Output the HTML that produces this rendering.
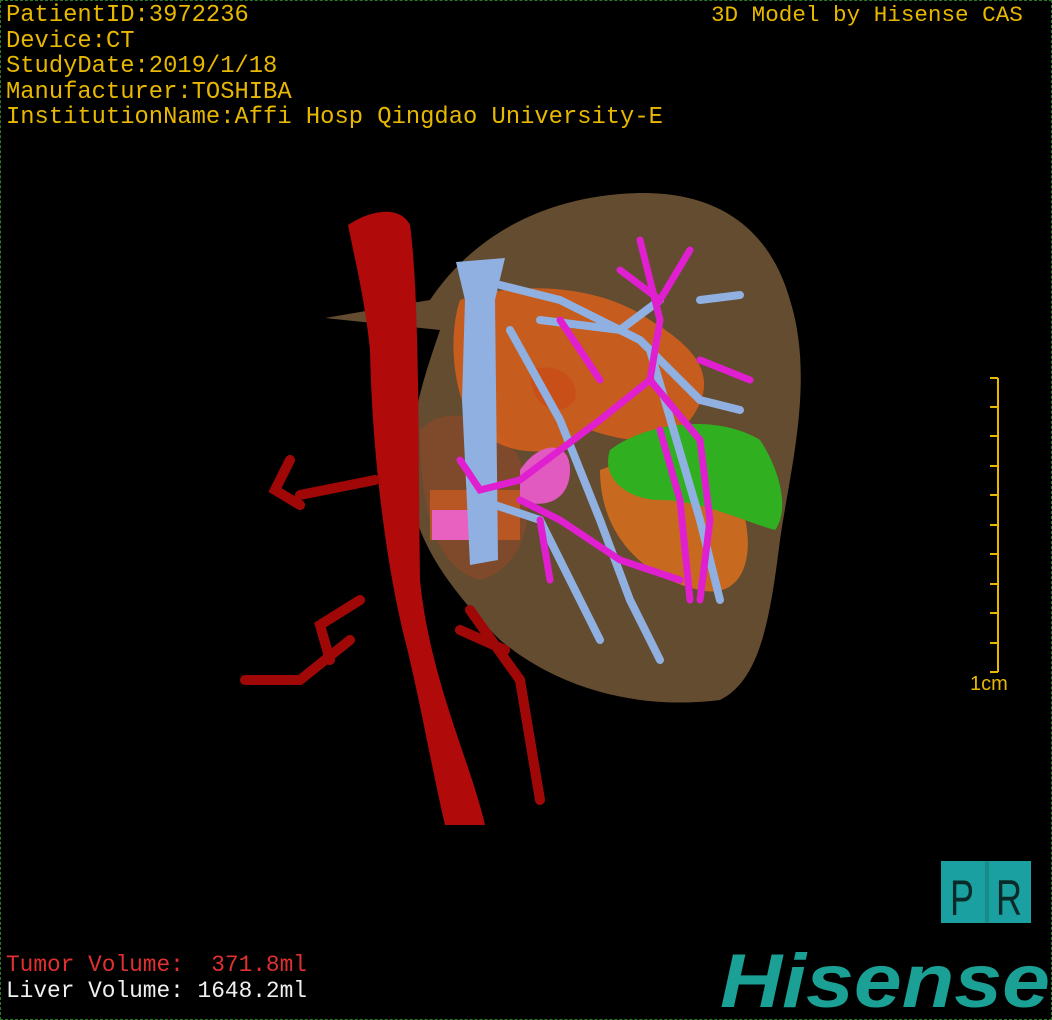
<!DOCTYPE html>
<html><head><style>
body{margin:0;background:#000;width:1052px;height:1020px;overflow:hidden;position:relative;font-family:"Liberation Mono","DejaVu Sans Mono",monospace}
.b{position:absolute;left:0;top:0;width:1050px;height:1018px;border:1px dashed #2a7a2a}
.t{position:absolute;color:#e8b800;font-size:23.8px;line-height:25.5px;white-space:pre;letter-spacing:0px}
</style></head><body>
<div class="b"></div>
<svg width="1052" height="1020" style="position:absolute;left:0;top:0">
<path d="M325,318 L430,300 C470,240 540,195 640,193 C720,192 770,230 790,300 C815,380 790,470 780,540 C770,620 760,680 720,700 C640,710 560,690 500,640 C440,580 400,520 410,450 C415,400 430,360 440,330 Z" fill="#6e5434" opacity="0.9"/>
<path d="M420,430 C450,400 500,420 520,460 C540,520 520,570 480,580 C440,570 420,520 420,430Z" fill="#8a4a2a" opacity=".7"/>
<path d="M460,300 C520,280 600,285 650,320 C700,350 720,380 690,420 C660,450 620,440 590,430 C560,460 500,460 470,420 C450,380 450,330 460,300Z" fill="#e0601c" opacity=".8"/>
<path d="M600,470 C650,450 720,460 740,500 C760,560 740,600 700,590 C650,580 600,540 600,470Z" fill="#e0701c" opacity=".8"/>
<path d="M530,370 C560,360 580,380 575,400 C560,420 530,410 530,370Z" fill="#c85018"/>
<path d="M430,490 L520,490 L520,540 L430,540Z" fill="#e06020" opacity=".6"/>
<path d="M610,450 C650,420 720,415 760,440 C780,470 790,510 775,530 C740,520 700,500 660,500 C630,500 600,480 610,450Z" fill="#30b020"/>
<path d="M348,225 C370,210 400,205 410,225 C420,300 418,450 420,580 C430,680 470,760 485,825 L445,825 C430,760 420,700 405,640 C385,560 372,450 370,350 C365,300 355,260 348,225Z" fill="#b00a0a"/>
<path d="M375,480 L300,495 M290,460 L275,490 L300,505 M360,600 L320,625 L330,660 M350,640 L300,680 L245,680 M470,610 L520,680 L540,800 M460,630 L505,650" stroke="#a00808" stroke-width="10" fill="none" stroke-linecap="round"/>
<path d="M520,470 C540,440 570,440 570,470 C570,500 545,510 520,500 Z" fill="#e05ac0"/>
<path d="M432,510 L470,510 L470,540 L432,540Z" fill="#e860c0"/>
<path d="M456,262 L505,258 L495,300 L498,560 L470,565 L462,400 L465,300Z" fill="#8fb0e0"/>
<g stroke="#8fb0e0" stroke-width="8" fill="none" stroke-linecap="round">
<path d="M500,285 L560,300 L640,340 L700,400 L740,410"/>
<path d="M510,330 L560,420 L600,520 L630,600 L660,660"/>
<path d="M700,300 L740,295 M650,350 L700,520 L720,600"/>
<path d="M540,320 L620,330 L660,300"/>
<path d="M480,500 L540,520 L580,600 L600,640"/>
</g>
<g stroke="#e020d0" stroke-width="7" fill="none" stroke-linecap="round">
<path d="M640,240 L660,320 L650,380 L600,420 L560,450 L520,480 L480,490 L460,460"/>
<path d="M620,270 L660,300 L690,250 M650,380 L700,440 L710,520 L700,600"/>
<path d="M560,320 L600,380 M700,360 L750,380 M520,500 L560,520 L620,560 L680,580"/>
<path d="M660,430 L680,500 L690,600 M540,520 L550,580"/>
</g>
<g stroke="#e8b800" stroke-width="2">
<line x1="998" y1="378" x2="998" y2="672"/>
<line x1="990" y1="378" x2="998" y2="378"/><line x1="990" y1="407" x2="998" y2="407"/><line x1="990" y1="436" x2="998" y2="436"/><line x1="990" y1="466" x2="998" y2="466"/><line x1="990" y1="495" x2="998" y2="495"/><line x1="990" y1="525" x2="998" y2="525"/><line x1="990" y1="554" x2="998" y2="554"/><line x1="990" y1="584" x2="998" y2="584"/><line x1="990" y1="613" x2="998" y2="613"/><line x1="990" y1="643" x2="998" y2="643"/><line x1="990" y1="672" x2="998" y2="672"/>
</g>
<rect x="941" y="861" width="90" height="62" fill="#1aa0a0"/>
<rect x="985" y="861" width="4" height="62" fill="#168c8c"/>
<text x="950" y="915" font-family="Liberation Sans Narrow,Liberation Sans,sans-serif" font-size="50" fill="#0a2a2a" textLength="24" lengthAdjust="spacingAndGlyphs">P</text>
<text x="996" y="915" font-family="Liberation Sans Narrow,Liberation Sans,sans-serif" font-size="50" fill="#0a2a2a" textLength="26" lengthAdjust="spacingAndGlyphs">R</text>
<text x="720" y="1007" font-family="Liberation Sans,sans-serif" font-weight="bold" font-style="italic" font-size="76" fill="#1aa094" textLength="330" lengthAdjust="spacingAndGlyphs">Hisense</text>
</svg>
<div class="t" style="left:6px;top:3px">PatientID:3972236
Device:CT
StudyDate:2019/1/18
Manufacturer:TOSHIBA
InstitutionName:Affi Hosp Qingdao University-E</div>
<div class="t" style="left:711px;top:3px;font-size:22.6px">3D Model by Hisense CAS</div>
<div class="t" style="left:970px;top:672px;font-family:'Liberation Sans',sans-serif;font-size:20px">1cm</div>
<div class="t" style="left:6px;top:953px;color:#e03030;font-size:22.8px">Tumor Volume:  371.8ml</div>
<div class="t" style="left:6px;top:979px;color:#f0f0f0;font-size:22.8px">Liver Volume: 1648.2ml</div>
</body></html>
